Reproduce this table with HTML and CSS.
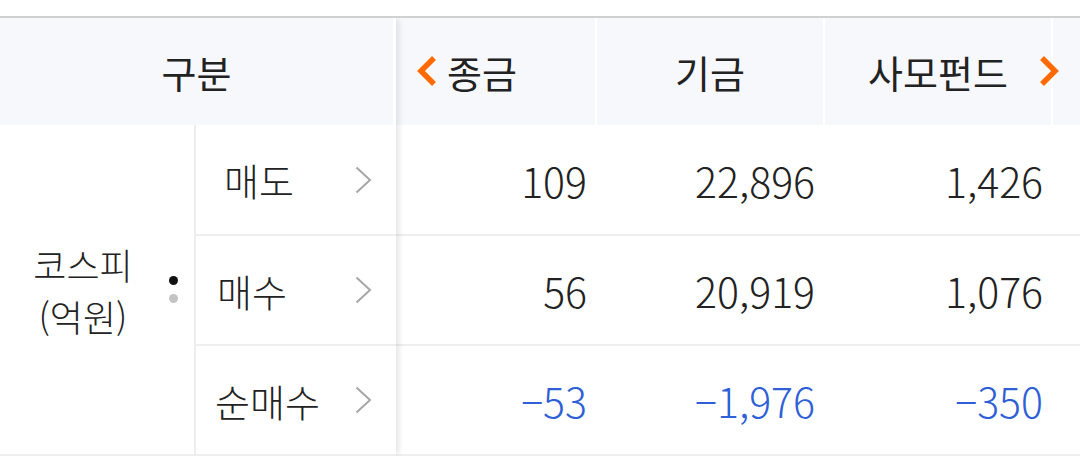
FILE: index.html
```html
<!DOCTYPE html>
<html lang="ko">
<head>
<meta charset="utf-8">
<title>투자자별 매매동향</title>
<link rel="stylesheet" href="styles.css">
</head>
<body>
<div class="page">
  <div class="table">
    <div class="fixed">
      <div class="head-cell">구분</div>
      <div class="group">
        <div class="group-label">코스피<br>(억원)</div>
        <div class="dots"><span class="dot on"></span><span class="dot"></span></div>
      </div>
      <div class="sub sub-sell"><span>매도</span><svg class="chev" viewBox="0 0 17 28" width="17" height="28"><polyline points="1.5,1.5 15,14 1.5,26.5" fill="none" stroke="#a6a6a6" stroke-width="2"/></svg></div>
      <div class="sub sub-buy"><span>매수</span><svg class="chev" viewBox="0 0 17 28" width="17" height="28"><polyline points="1.5,1.5 15,14 1.5,26.5" fill="none" stroke="#a6a6a6" stroke-width="2"/></svg></div>
      <div class="sub sub-net"><span>순매수</span><svg class="chev" viewBox="0 0 17 28" width="17" height="28"><polyline points="1.5,1.5 15,14 1.5,26.5" fill="none" stroke="#a6a6a6" stroke-width="2"/></svg></div>
    </div>
    <div class="scroll">
      <div class="cols">
        <div class="th">종금</div>
        <div class="th">기금</div>
        <div class="th">사모펀드</div>
        <div class="th"></div>

        <div class="td">109</div>
        <div class="td">22,896</div>
        <div class="td">1,426</div>
        <div class="td"></div>

        <div class="td">56</div>
        <div class="td">20,919</div>
        <div class="td">1,076</div>
        <div class="td"></div>

        <div class="td neg">−53</div>
        <div class="td neg">−1,976</div>
        <div class="td neg">−350</div>
        <div class="td"></div>
      </div>
    </div>
    <button class="nav prev" aria-label="이전"><svg viewBox="0 0 22 32" width="22" height="32"><polyline points="18,3 5,16 18,29" fill="none" stroke="#ff6a00" stroke-width="5.5"/></svg></button>
    <button class="nav next" aria-label="다음"><svg viewBox="0 0 22 32" width="22" height="32"><polyline points="4,3 17,16 4,29" fill="none" stroke="#ff6a00" stroke-width="5.5"/></svg></button>
  </div>
</div>
</body>
</html>
```
FILE: styles.css
```css
* {
  box-sizing: border-box;
  margin: 0;
  padding: 0;
}

body {
  margin: 0;
  background: #fff;
  color: #222;
  font-family: "Noto Sans CJK KR", "Noto Sans", sans-serif;
}

.page {
  padding-top: 16px;
}

.table {
  position: relative;
  display: flex;
  border-top: 2px solid #d0d0d0;
  overflow: hidden;
}

.fixed {
  flex: 0 0 396px;
  display: grid;
  grid-template-columns: 196px 200px;
  grid-template-rows: 107px 111px 110px 110px;
  position: relative;
  z-index: 2;
  background: #fff;
  box-shadow: 5px 0 6px -2px rgba(0, 0, 0, 0.1);
}

.head-cell {
  grid-column: 1 / 3;
  background: #f7f8fc;
  border-right: 3px solid #fff;
  display: flex;
  align-items: center;
  justify-content: center;
  font-size: 38px;
  font-weight: 400;
}

.group {
  grid-row: 2 / 5;
  grid-column: 1;
  border-right: 2px solid #eee;
  border-bottom: 2px solid #eee;
  display: flex;
  align-items: center;
}

.group-label {
  width: 166px;
  text-align: center;
  font-size: 36px;
  line-height: 52px;
  font-weight: 300;
}

.dots {
  display: flex;
  flex-direction: column;
  gap: 9px;
  margin-left: 3px;
}

.dot {
  display: block;
  width: 9px;
  height: 9px;
  border-radius: 50%;
  background: #c4c4c4;
}

.dot.on {
  background: #111;
}

.sub {
  grid-column: 2;
  display: flex;
  align-items: center;
  justify-content: space-between;
  border-bottom: 2px solid #eee;
  padding-right: 24px;
  font-size: 38px;
  font-weight: 300;
}

.sub-sell { padding-left: 28px; }
.sub-buy { padding-left: 21px; }
.sub-net { padding-left: 19px; }

.chev {
  display: block;
}

.scroll {
  flex: 1;
  overflow: hidden;
}

.cols {
  display: grid;
  grid-template-columns: repeat(4, 228px);
  grid-template-rows: 107px 111px 110px 110px;
  margin-left: -27px;
}

.th {
  background: #f7f8fc;
  border-right: 2px solid #fff;
  display: flex;
  align-items: center;
  justify-content: center;
  font-size: 38px;
  font-weight: 400;
  white-space: nowrap;
}

.td {
  border-bottom: 2px solid #eee;
  display: flex;
  align-items: center;
  justify-content: flex-end;
  padding-right: 10px;
  font-size: 41px;
  font-weight: 300;
}

.neg {
  color: #2f5fd6;
}

.nav {
  position: absolute;
  top: 37px;
  width: 22px;
  height: 32px;
  border: 0;
  background: none;
  z-index: 3;
}

.nav svg {
  display: block;
}

.prev { left: 416px; }
.next { left: 1038px; }
```
